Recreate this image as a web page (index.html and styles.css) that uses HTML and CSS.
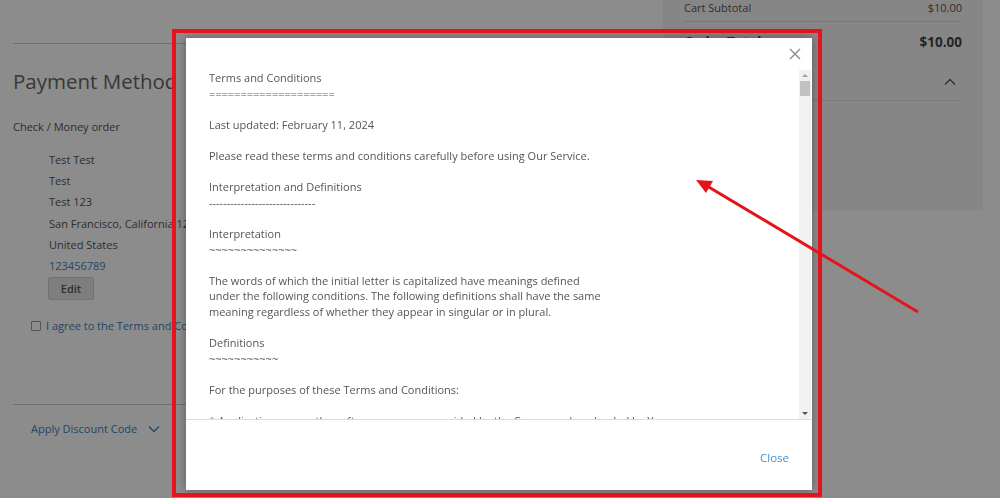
FILE: index.html
```html
<!DOCTYPE html>
<html lang="en">
<head>
  <meta charset="UTF-8" />
  <title>Checkout - Terms and Conditions</title>
  <link rel="stylesheet" href="styles.css">
</head>
<body>
  <div class="page">
    <main class="checkout">
      <h2 class="title">Payment Method</h2>
      <div class="method">Check / Money order</div>
      <div class="address">
        <div>Test Test</div>
        <div>Test</div>
        <div>Test 123</div>
        <div>San Francisco, California 12345</div>
        <div>United States</div>
        <div><a href="#">123456789</a></div>
      </div>
      <button class="edit">Edit</button>
      <label class="agree"><span class="box"></span><a href="#">I agree to the Terms and Conditions</a></label>
      <div class="discount">
        <a href="#">Apply Discount Code</a>
        <svg width="12" height="8" viewBox="0 0 12 8"><path d="M1 1.5l5 5 5-5" fill="none" stroke="#3f7fb5" stroke-width="1.3"/></svg>
      </div>
    </main>

    <aside class="summary">
      <div class="row">
        <span>Cart Subtotal</span><span>$10.00</span>
      </div>
      <div class="row total">
        <span>Order Total</span><span>$10.00</span>
      </div>
      <div class="row items">
        <span></span>
        <svg width="12" height="8" viewBox="0 0 12 8"><path d="M1 6.5l5-5 5 5" fill="none" stroke="#555" stroke-width="1.3"/></svg>
      </div>
    </aside>
  </div>

  <div class="overlay"></div>

  <div class="modal">
    <div class="modal-head">
      <button class="close-x">
        <svg width="12" height="12" viewBox="0 0 12 12"><path d="M1 1l10 10M11 1L1 11" stroke="#8a8a8a" stroke-width="1.4"/></svg>
      </button>
    </div>
    <div class="modal-body">
      <div class="terms">Terms and Conditions
====================

Last updated: February 11, 2024

Please read these terms and conditions carefully before using Our Service.

Interpretation and Definitions
------------------------------

Interpretation
~~~~~~~~~~~~~~

The words of which the initial letter is capitalized have meanings defined
under the following conditions. The following definitions shall have the same
meaning regardless of whether they appear in singular or in plural.

Definitions
~~~~~~~~~~~

For the purposes of these Terms and Conditions:

* Application means the software program provided by the Company downloaded by You
</div>
      <div class="scrollbar">
        <span class="arrow up"></span>
        <span class="thumb"></span>
        <span class="track"></span>
        <span class="arrow down"></span>
      </div>
    </div>
    <div class="modal-foot">
      <a href="#">Close</a>
    </div>
  </div>

  <svg class="annotation" width="1000" height="498" viewBox="0 0 1000 498">
    <rect x="174" y="31" width="646" height="464" fill="none" stroke="#e3141b" stroke-width="4"/>
    <line x1="918" y1="312" x2="707" y2="186" stroke="#e3141b" stroke-width="3"/>
    <polygon points="696,180 713,181 706,193" fill="#e3141b"/>
  </svg>
</body>
</html>
```

FILE: styles.css
```css
body {
  margin: 0;
  font-family: 'Open Sans', sans-serif;
  font-size: 11px;
  color: #555;
  background: #fff;
  height: 498px;
  overflow: hidden;
}
a { color: #3f7fb5; text-decoration: none; }

.page {
  display: flex;
  gap: 23px;
  padding: 0 17px 0 13px;
}

/* left column */
.checkout {
  flex: 1;
  margin-top: 43px;
  border-top: 1px solid #ccc;
}
.title {
  margin: 23px 0 0;
  font-size: 20.5px;
  font-weight: 400;
  line-height: 28px;
  color: #666;
}
.method {
  margin-top: 24px;
  line-height: 16px;
}
.address {
  margin: 14px 0 0 36px;
  line-height: 21.2px;
}
.edit {
  margin: 1px 0 0 35px;
  width: 46px;
  height: 23px;
  font-family: inherit;
  font-size: 11px;
  font-weight: 600;
  color: #555;
  background: #e6e6e6;
  border: 1px solid #d0d0d0;
  border-radius: 2px;
}
.agree {
  display: flex;
  align-items: center;
  gap: 5px;
  margin: 18px 0 0 18px;
  line-height: 16px;
}
.agree .box {
  width: 8px;
  height: 8px;
  border: 1px solid #999;
  border-radius: 1px;
  background: #fff;
}
.discount {
  display: flex;
  align-items: center;
  gap: 11px;
  margin-top: 70px;
  padding: 16px 18px;
  border-top: 1px solid #ccc;
  font-size: 11px;
}

/* right column */
.summary {
  width: 278px;
  height: 210px;
  padding: 0 21px;
  background: #f5f5f5;
}
.summary .row {
  display: flex;
  justify-content: space-between;
  align-items: center;
  border-bottom: 1px solid #ddd;
  line-height: 16px;
}
.summary .row:first-child { padding: 0 0 5px; }
.summary .total {
  padding: 12px 0 0;
  border: none;
  font-size: 13.5px;
  font-weight: 700;
  color: #444;
}
.summary .items {
  align-items: flex-start;
  padding: 28px 6px 14px 0;
  line-height: 8px;
}

.overlay {
  position: fixed;
  inset: 0;
  background: rgba(0, 0, 0, 0.45);
}

/* modal */
.modal {
  position: fixed;
  left: 186px;
  top: 38px;
  width: 626px;
  height: 452px;
  background: #fff;
  box-shadow: 0 0 10px rgba(0, 0, 0, 0.35);
  display: flex;
  flex-direction: column;
}
.modal-head {
  height: 32px;
  display: flex;
  justify-content: flex-end;
  align-items: center;
  padding-right: 11px;
}
.close-x {
  background: none;
  border: none;
  padding: 0;
  display: flex;
}
.modal-body {
  display: flex;
  height: 349px;
  border-bottom: 1px solid #ddd;
}
.terms {
  flex: 1;
  padding-left: 23px;
  white-space: pre;
  font-size: 11px;
  line-height: 15.6px;
  color: #555;
  overflow: hidden;
}
.scrollbar {
  width: 12px;
  margin-right: 1px;
  background: #f1f1f1;
  display: flex;
  flex-direction: column;
  align-items: center;
}
.scrollbar .arrow {
  width: 0;
  height: 0;
  margin: 4px 0;
  border-left: 3px solid transparent;
  border-right: 3px solid transparent;
}
.scrollbar .up { border-bottom: 3px solid #a3a3a3; }
.scrollbar .down { border-top: 3px solid #505050; }
.scrollbar .thumb {
  width: 10px;
  height: 15px;
  background: #c1c1c1;
}
.scrollbar .track { flex: 1; }
.modal-foot {
  flex: 1;
  display: flex;
  justify-content: flex-end;
  align-items: center;
  padding: 4px 23px 0 0;
  font-size: 11.5px;
}
.modal-foot a { color: #4a8fc7; }

.annotation {
  position: fixed;
  left: 0;
  top: 0;
}
```
